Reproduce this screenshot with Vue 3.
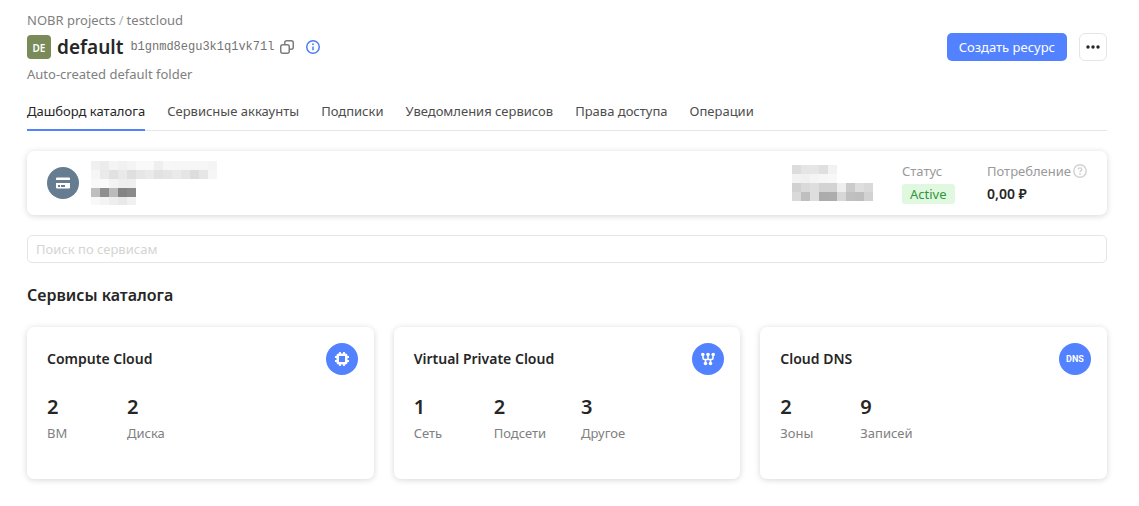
<script setup>
import { ref } from 'vue'

const tabs = [
  'Дашборд каталога',
  'Сервисные аккаунты',
  'Подписки',
  'Уведомления сервисов',
  'Права доступа',
  'Операции',
]
const activeTab = ref(0)
const query = ref('')

const services = [
  { name: 'Compute Cloud', icon: 'compute', stats: [['2', 'ВМ'], ['2', 'Диска']] },
  { name: 'Virtual Private Cloud', icon: 'network', stats: [['1', 'Сеть'], ['2', 'Подсети'], ['3', 'Другое']] },
  { name: 'Cloud DNS', icon: 'dns', stats: [['2', 'Зоны'], ['9', 'Записей']] },
]

// Grey levels of the masked account fields, one row per line of cells.
const accountMask = [
  [240, 236, 244, 241, 244, 249, 249, 239, 247, 246, 246, 246, 246, 244],
  [246, 234, 225, 233, 223, 230, 234, 226, 229, 234, 229, 221, 230, 246],
  [249, 250, 243, 239, 239],
  [190, 143, 187, 132, 138],
  [248, 244, 238, 233, 241],
]
const balanceMask = [
  [220, 229, 230, 223, 242],
  [242, 240, 244, 246, 248],
  [209, 218, 222, 211, 211, 238, 203, 222, 217],
  [217, 191, 222, 172, 173, 215, 192, 190, 210],
]
const grey = (v) => `rgb(${v}, ${v}, ${v})`
</script>

<template>
  <div class="page">
    <header class="header">
      <div class="info">
        <nav class="crumbs">
          <a href="#">NOBR projects</a><span class="slash">/</span><a href="#">testcloud</a>
        </nav>
        <div class="title-row">
          <span class="avatar">DE</span>
          <h1>default</h1>
          <code>b1gnmd8egu3k1q1vk71l</code>
          <button class="icon-btn copy" type="button" aria-label="Copy">
            <svg width="16" height="16" viewBox="0 0 16 16" fill="none" stroke="currentColor" stroke-width="1.5">
              <rect x="1.75" y="5.75" width="8.5" height="8.5" rx="2" />
              <path d="M5.75 5.5V3.75a2 2 0 0 1 2-2h4.5a2 2 0 0 1 2 2v4.5a2 2 0 0 1-2 2H10.5" />
            </svg>
          </button>
          <button class="icon-btn about" type="button" aria-label="Info">
            <svg width="16" height="16" viewBox="0 0 16 16" fill="none" stroke="currentColor" stroke-width="1.5">
              <circle cx="8" cy="8" r="6.25" />
              <path d="M8 7.5v3.7" />
              <circle cx="8" cy="5.2" r="0.9" fill="currentColor" stroke="none" />
            </svg>
          </button>
        </div>
        <p class="description">Auto-created default folder</p>
      </div>
      <div class="actions">
        <button class="primary" type="button">Создать ресурс</button>
        <button class="more" type="button" aria-label="More">
          <svg width="16" height="16" viewBox="0 0 16 16" fill="currentColor">
            <circle cx="3" cy="8" r="1.7" /><circle cx="8" cy="8" r="1.7" /><circle cx="13" cy="8" r="1.7" />
          </svg>
        </button>
      </div>
    </header>

    <div class="tabs" role="tablist">
      <button
        v-for="(tab, i) in tabs"
        :key="tab"
        type="button"
        role="tab"
        class="tab"
        :class="{ active: i === activeTab }"
        :aria-selected="i === activeTab"
        @click="activeTab = i"
      >{{ tab }}</button>
    </div>

    <section class="card billing">
      <span class="badge slate">
        <svg width="16" height="16" viewBox="0 0 16 16">
          <path fill="#fff" d="M1 3.5a1 1 0 0 1 1-1h12a1 1 0 0 1 1 1V5H1zM1 8h14v4.5a1 1 0 0 1-1 1H2a1 1 0 0 1-1-1z" />
          <path fill="#667c91" d="M3 10h2v2H3zM6 10h4v2H6z" />
        </svg>
      </span>
      <svg class="account" width="126" height="44" shape-rendering="crispEdges" aria-hidden="true">
        <g v-for="(row, y) in accountMask" :key="y">
          <rect v-for="(v, x) in row" :key="x" :x="x * 9" :y="y * 9" width="9" height="9" :fill="grey(v)" />
        </g>
      </svg>
      <svg class="balance" width="81" height="36" shape-rendering="crispEdges" aria-hidden="true">
        <g v-for="(row, y) in balanceMask" :key="y">
          <rect v-for="(v, x) in row" :key="x" :x="x * 9" :y="y * 9" width="9" height="9" :fill="grey(v)" />
        </g>
      </svg>
      <div class="field status">
        <span class="label">Статус</span>
        <span class="chip">Active</span>
      </div>
      <div class="field usage">
        <span class="label">Потребление
          <svg width="14" height="14" viewBox="0 0 14 14" fill="none" stroke="#d2d2d2" stroke-width="1.4">
            <circle cx="7" cy="7" r="6.2" />
            <path d="M5.2 5.6c0-1 .8-1.7 1.8-1.7s1.8.6 1.8 1.6C8.8 6.7 7 6.7 7 8" />
            <circle cx="7" cy="10" r="0.9" fill="#d2d2d2" stroke="none" />
          </svg>
        </span>
        <strong>0,00 ₽</strong>
      </div>
    </section>

    <input v-model="query" class="search" type="text" placeholder="Поиск по сервисам" aria-label="Поиск по сервисам" />

    <h2>Сервисы каталога</h2>

    <div class="services">
      <article v-for="s in services" :key="s.name" class="card service">
        <div class="service-head">
          <h3>{{ s.name }}</h3>
          <span class="badge">
            <svg v-if="s.icon === 'compute'" width="16" height="16" viewBox="0 0 16 16">
              <path fill="#fff" fill-rule="evenodd" d="M4.5 2.5h7a2 2 0 0 1 2 2v7a2 2 0 0 1-2 2h-7a2 2 0 0 1-2-2v-7a2 2 0 0 1 2-2zM5 5v6h6V5z" />
              <path stroke="#fff" stroke-width="1.8" d="M6 1v2M10 1v2M6 13v2M10 13v2M1 6h2M1 10h2M13 6h2M13 10h2" />
            </svg>
            <svg v-else-if="s.icon === 'network'" width="16" height="16" viewBox="0 0 16 16">
              <path fill="none" stroke="#fff" stroke-width="1.6" d="M3 4v3a1.5 1.5 0 0 0 1.5 1.5h7A1.5 1.5 0 0 0 13 7V4M8 4v4.5M5.5 8.5V12M10.5 8.5V12" />
              <g fill="#fff">
                <circle cx="2.8" cy="3.5" r="1.8" /><circle cx="8" cy="3.5" r="1.8" /><circle cx="13.2" cy="3.5" r="1.8" />
                <circle cx="5.5" cy="12.5" r="1.8" /><circle cx="10.5" cy="12.5" r="1.8" />
              </g>
            </svg>
            <span v-else class="dns">DNS</span>
          </span>
        </div>
        <dl class="stats">
          <div v-for="[value, label] in s.stats" :key="label" class="stat">
            <dt>{{ label }}</dt>
            <dd>{{ value }}</dd>
          </div>
        </dl>
      </article>
    </div>
  </div>
</template>

<style>
body {
  margin: 0;
  background: #fff;
}
</style>

<style scoped>
.page {
  box-sizing: border-box;
  padding: 11px 32px 27px 27px;
  font: 13px/18px "Noto Sans", "Open Sans", sans-serif;
  color: #262626;
}
button {
  font: inherit;
  cursor: pointer;
}
h1, h2, h3, p, dl, dd {
  margin: 0;
}
.header {
  display: flex;
  justify-content: space-between;
}
.crumbs, .crumbs a, .description {
  color: #808080;
  text-decoration: none;
}
.slash {
  margin: 0 3px;
  color: #b3b3b3;
}
.title-row {
  display: flex;
  align-items: center;
  height: 36px;
}
.avatar {
  width: 24px;
  height: 24px;
  border-radius: 4px;
  background: #7a8a58;
  color: #fff;
  font-size: 10px;
  font-weight: 600;
  line-height: 26px;
  text-align: center;
}
h1 {
  margin: 0 7px 0 6px;
  font-size: 19px;
  font-weight: 600;
  line-height: 24px;
}
code {
  font: 12px/18px "Liberation Mono", monospace;
  color: #737373;
}
.icon-btn {
  display: flex;
  padding: 0;
  border: 0;
  background: none;
}
.copy {
  margin: 0 10px 0 5px;
  color: #7d7d7d;
}
.about {
  color: #4d7df5;
}
.actions {
  display: flex;
  gap: 12px;
  padding-top: 22px;
}
.primary {
  height: 28px;
  padding: 0 12px;
  border: 0;
  border-radius: 5px;
  background: #5282ff;
  color: #fff;
}
.more {
  display: flex;
  align-items: center;
  justify-content: center;
  width: 28px;
  height: 28px;
  padding: 0;
  border: 1px solid #e5e5e5;
  border-radius: 6px;
  background: #fff;
  color: #262626;
}
.tabs {
  display: flex;
  gap: 22px;
  margin-top: 19px;
  box-shadow: inset 0 -1px #e5e5e5;
}
.tab {
  padding: 0 0 9px;
  border: 0;
  border-bottom: 2px solid transparent;
  background: none;
  color: #4d4d4d;
  line-height: 18px;
}
.tab.active {
  border-color: #5282ff;
  color: #262626;
}
.card {
  border-radius: 7px;
  background: #fff;
  box-shadow: 0 1px 6px rgba(0, 0, 0, 0.16);
}
.billing {
  display: flex;
  align-items: center;
  height: 64px;
  margin-top: 20px;
  padding: 0 20px;
}
.badge {
  display: flex;
  flex: none;
  align-items: center;
  justify-content: center;
  width: 32px;
  height: 32px;
  border-radius: 50%;
  background: #5282ff;
}
.slate {
  background: #667c91;
}
.account {
  margin-left: 12px;
}
.balance {
  margin-left: auto;
}
.field {
  display: flex;
  flex-direction: column;
  align-items: flex-start;
  gap: 4px;
}
.status {
  width: 56px;
  margin-left: 29px;
}
.usage {
  margin-left: 29px;
}
.label {
  display: flex;
  align-items: center;
  gap: 2px;
  color: #999;
}
.chip {
  padding: 0 8px;
  border-radius: 3px;
  background: #e0f7e0;
  color: #32963c;
  line-height: 20px;
}
.usage strong {
  font-size: 14px;
  font-weight: 600;
  line-height: 20px;
}
.search {
  display: block;
  box-sizing: border-box;
  width: 100%;
  height: 28px;
  margin-top: 20px;
  padding: 0 8px;
  border: 1px solid #e5e5e5;
  border-radius: 5px;
  outline: 0;
  font: inherit;
}
.search::placeholder {
  color: #d4d4d4;
}
h2 {
  margin-top: 20px;
  font-size: 16px;
  font-weight: 600;
  line-height: 24px;
}
.services {
  display: grid;
  grid-template-columns: repeat(3, 1fr);
  gap: 20px;
  margin-top: 20px;
}
.service {
  padding: 16px 16px 37px 20px;
}
.service-head {
  display: flex;
  align-items: center;
  justify-content: space-between;
}
h3 {
  font-size: 14px;
  font-weight: 600;
  line-height: 20px;
}
.dns {
  color: #fff;
  font: bold 9px/12px Roboto, "Liberation Sans", sans-serif;
}
.stats {
  display: flex;
  gap: 35px;
  margin-top: 20px;
}
.stat {
  display: flex;
  flex-direction: column-reverse;
  gap: 5px;
  min-width: 45px;
}
dt {
  color: #808080;
}
dd {
  font-size: 20px;
  font-weight: 600;
  line-height: 24px;
}
</style>
